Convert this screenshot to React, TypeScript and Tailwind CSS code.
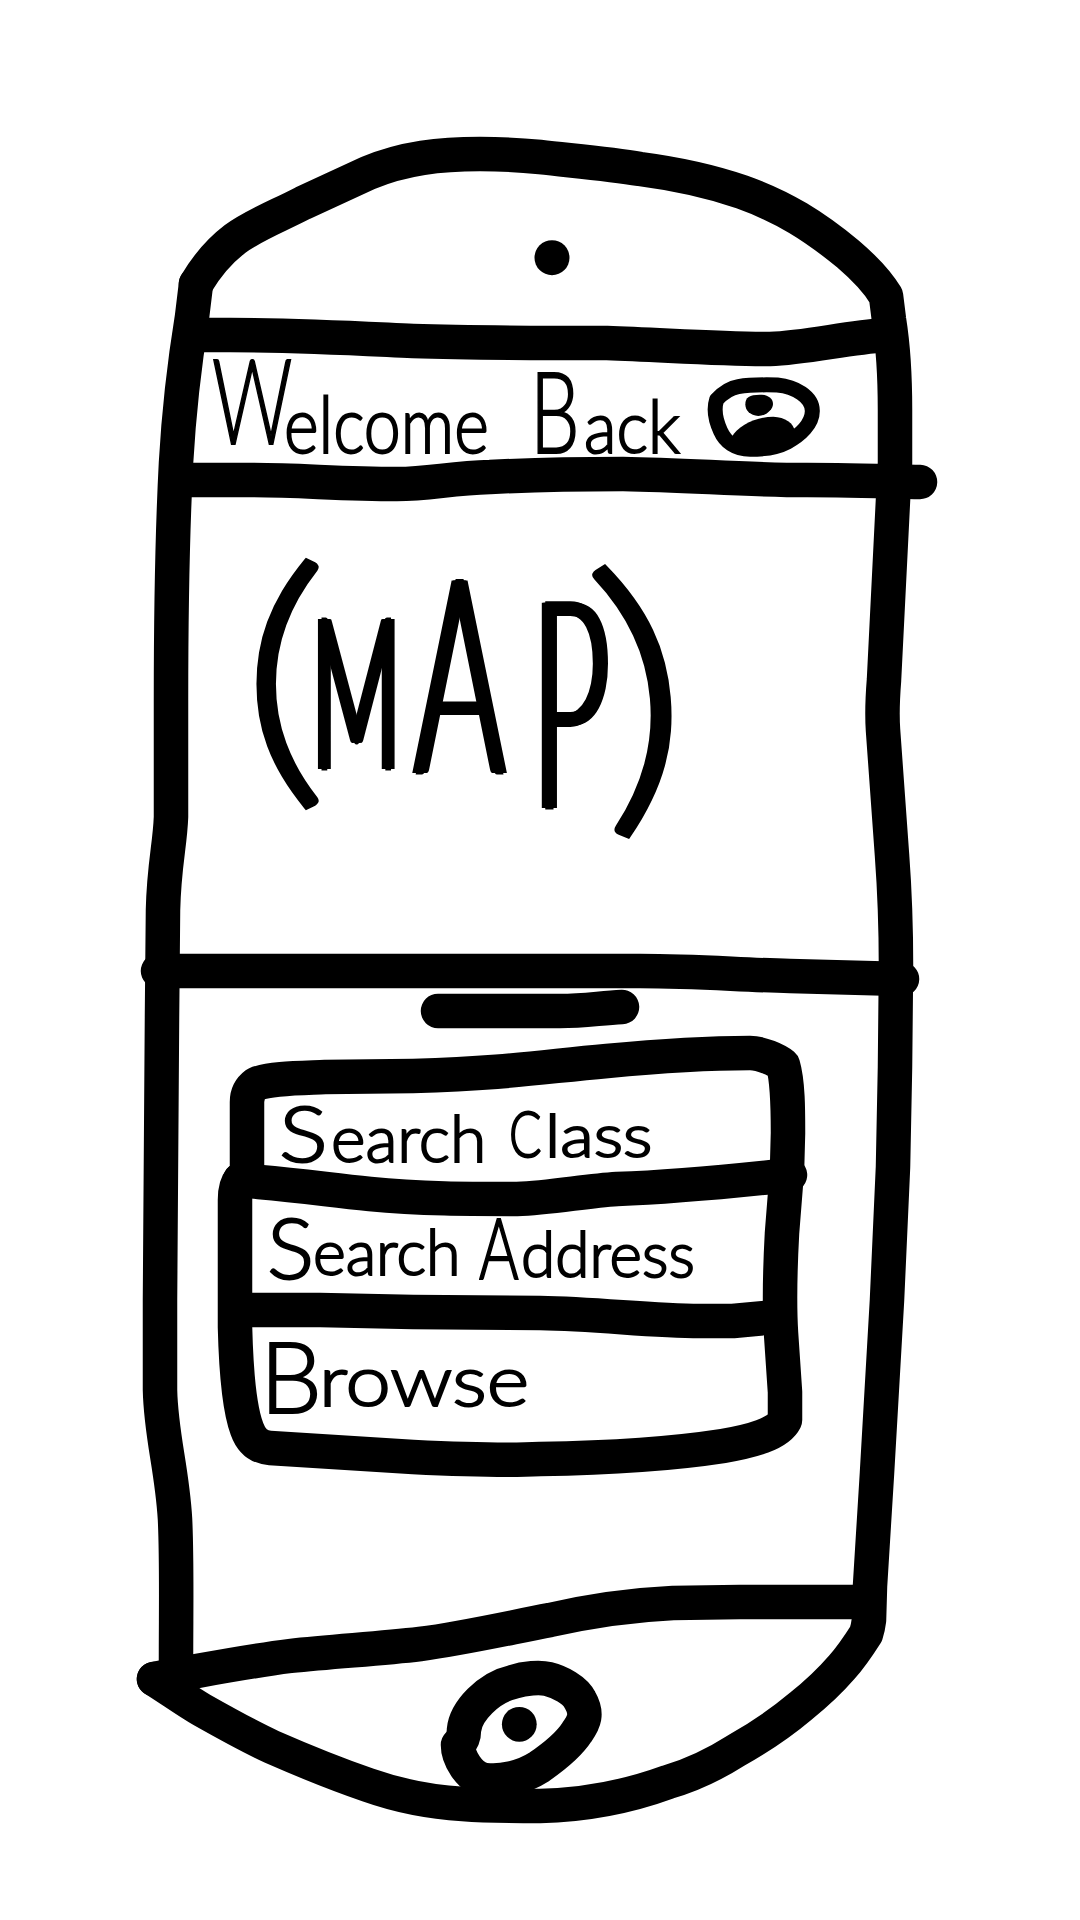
import React from "react";

/** Marker strokes of the hand-drawn phone: shell, dividers and panels. */
function PhoneSketch() {
  return (
    <svg
      className="absolute inset-0 h-full w-full"
      viewBox="0 0 1080 1920"
      fill="none"
      stroke="black"
      strokeWidth="34.5"
      strokeLinecap="round"
      strokeLinejoin="round"
      aria-hidden="true"
    >
      {/* shell */}
      <path d="M196 284C206 267 218 252 235 239C254 225 278 216 303 203L368 173C404 158 440 154 480 154C500 154 520 155 540 157C575 161 610 164 640 169C678 174 710 181 742 192C784 207 814 226 848 254C862 266 877 281 886 296L889 320C893 345 895 377 895 410V463L893 500L884 680C882 705 882 715 883 730L892 855C895 895 896 930 896 967L895 1067L893 1167L887 1300L877 1473L870 1586L869 1620Q868 1628 866 1634C859 1645 851 1657 842 1667C829 1682 816 1694 801 1706C782 1722 760 1737 737 1750C715 1764 692 1775 668 1782C627 1797 583 1805 540 1806C514 1806 489 1806 463 1804C430 1802 399 1796 368 1785C336 1774 304 1761 272 1747C248 1736 225 1723 202 1710C185 1700 170 1689 154 1679" />
      <path d="M196 284L192 317C185 360 179 410 176 463C172 540 171 640 171 700V817C170 845 164 865 163 910L162 1017L160 1300V1390C161 1436 172 1468 175 1519C177 1560 176 1608 176 1662" />
      {/* dividers */}
      <path d="M190 335H230C300 335 350 338 413 341C475 343 540 343 607 343C665 345 720 349 770 349C805 348 845 338 885 335" />
      <path d="M178 480H250C300 480 340 484 397 484C430 484 450 478 490 477C530 475 575 474 623 474C690 475 745 480 807 480C845 480 880 481 920 482" />
      <path d="M158 971H640C700 971 740 975 790 976L902 979" />
      <path d="M438 1011H560C585 1011 600 1008 622 1007" />
      <path d="M154 1679L197 1671C230 1665 258 1660 290 1656C335 1651 378 1649 420 1644C465 1638 508 1628 550 1620C590 1611 630 1605 673 1603L740 1602H860" />
      {/* option panel */}
      <path d="M247 1175V1102C247 1092 252 1087 256 1084C270 1078 300 1078 325 1077L413 1076C510 1073 540 1067 607 1061C660 1056 710 1053 750 1053C761 1053 777 1060 783 1065C788 1082 788 1110 788 1133L787 1170L782 1233C780 1270 779 1300 781 1333L785 1392V1420C778 1434 752 1441 723 1446C665 1455 605 1458 540 1459C500 1461 455 1459 413 1457L270 1448C258 1447 251 1440 247 1429C239 1408 236 1367 235 1327V1200Q235 1186 240 1180" />
      <path d="M240 1180L259 1182C305 1186 330 1190 370 1194C420 1199 470 1199 517 1199C550 1198 585 1191 617 1189C675 1187 735 1181 790 1175" />
      <path d="M246 1310H320L413 1312L540 1313C600 1314 650 1321 700 1321H733L775 1317" />
      {/* home button */}
      <path d="M464 1730C465 1718 472 1709 480 1701C490 1691 500 1685 513 1682C525 1678 540 1677 548 1679C560 1682 575 1690 580 1700C588 1714 584 1722 577 1732C568 1746 552 1758 539 1767C522 1778 500 1782 485 1780C469 1778 458 1757 458 1745Q464 1739 464 1730Z" />
      <circle cx="519.300" cy="1724.300" r="17.400" fill="black" stroke="none" />
      {/* camera */}
      <circle cx="552" cy="257.700" r="17.500" fill="black" stroke="none" />
    </svg>
  );
}

function AvatarIcon() {
  return (
    <svg className="h-[110px] w-[150px]" viewBox="0 0 450 330" fill="none" aria-hidden="true">
      <path
        d="M80 119C96 102 120 84 145 80C180 74 225 74 262 75C315 80 367 110 367 153C367 192 330 226 292 246C262 262 220 268 180 268C135 268 105 244 92 214C78 184 70 150 80 119Z"
        stroke="black"
        strokeWidth="45"
        strokeLinejoin="round"
      />
      <path d="M166 133C166 112 178 104 210 104C235 104 249 116 249 132C249 148 228 168 205 168C180 166 166 152 166 133Z" fill="black" />
      <path d="M125 232C143 196 200 170 250 170C285 171 312 190 314 214L290 250L180 270Z" fill="black" />
    </svg>
  );
}

function Piece({ className, children }: { className: string; children: string }) {
  return <span className={`inline-block origin-left whitespace-nowrap ${className}`}>{children}</span>;
}

export default function App() {
  return (
    <main className="relative h-[1920px] w-[1080px] overflow-hidden bg-white font-['Lato'] font-light text-black">
      <PhoneSketch />
      <div className="relative flex h-full flex-col pt-[352px]">
        <header className="flex h-[111px] items-start pl-[212px]">
          <h1 className="flex h-[111px] w-[478px] items-baseline leading-[111px] [-webkit-text-stroke:2px_black]">
            <Piece className="w-[72px] -translate-y-[9px] scale-x-[0.67] text-[118px]">W</Piece>
            <Piece className="w-[246px] scale-x-[0.85] text-[78px]">elcome</Piece>
            <Piece className="w-[54px] scale-x-[0.7] text-[112px]">B</Piece>
            <Piece className="scale-x-[0.93] text-[72px]">ack</Piece>
          </h1>
          <div className="pt-[8px]">
            <AvatarIcon />
          </div>
        </header>

        <section className="mt-[35px] h-[456px] pl-[240px]">
          <p className="flex h-[400px] items-start leading-none">
            <Piece className="mt-[29px] w-[72px] scale-x-[1.25] text-[276px] [-webkit-text-stroke:4px_black]">(</Piece>
            <Piece className="mt-[83px] w-[103px] scale-x-[0.46] text-[212px] [-webkit-text-stroke:3px_black] [text-shadow:3px_0_black,-3px_0_black,6px_0_black,-6px_0_black,9px_0_black,-9px_0_black]">M</Piece>
            <Piece className="mt-[34px] w-[117px] scale-x-[0.5] text-[272px] [-webkit-text-stroke:3px_black] [text-shadow:3px_0_black,-3px_0_black,6px_0_black,-6px_0_black,9px_0_black,-9px_0_black]">A</Piece>
            <Piece className="mt-[53px] w-[58px] scale-x-[0.46] text-[290px] [-webkit-text-stroke:3px_black] [text-shadow:3px_0_black,-3px_0_black,6px_0_black,-6px_0_black,9px_0_black,-9px_0_black]">P</Piece>
            <Piece className="mt-[33px] -rotate-[5deg] scale-x-[1.25] text-[302px] [-webkit-text-stroke:4px_black]">)</Piece>
          </p>
        </section>

        <nav className="mt-[134px] flex flex-col pl-[267px] [-webkit-text-stroke:2px_black]">
          <button className="flex h-[90px] items-baseline pl-[12px] text-left leading-[90px]">
            <Piece className="w-[52px] scale-x-[1.2] text-[76px]">S</Piece>
            <Piece className="w-[178px] text-[66px]">earch</Piece>
            <Piece className="w-[36px] -translate-y-[5px] scale-x-[0.75] text-[64px]">C</Piece>
            <Piece className="-translate-y-[5px] scale-x-[1.15] text-[60px]">lass</Piece>
          </button>
          <button className="mt-[24px] flex h-[90px] items-baseline text-left leading-[90px]">
            <Piece className="w-[46px] scale-x-[1.05] text-[84px]">S</Piece>
            <Piece className="w-[166px] -translate-y-[4px] scale-x-[0.98] text-[64px]">earch</Piece>
            <Piece className="w-[42px] scale-x-[0.72] text-[84px]">A</Piece>
            <Piece className="-translate-y-[2px] scale-x-[0.97] text-[64px]">ddress</Piece>
          </button>
          <button className="mt-[35px] flex h-[90px] items-baseline text-left leading-[90px]">
            <Piece className="-ml-[7px] w-[59px] translate-y-[3px] text-[98px]">B</Piece>
            <Piece className="-translate-y-[4px] scale-x-[1.16] text-[70px]">rowse</Piece>
          </button>
        </nav>
      </div>
    </main>
  );
}
